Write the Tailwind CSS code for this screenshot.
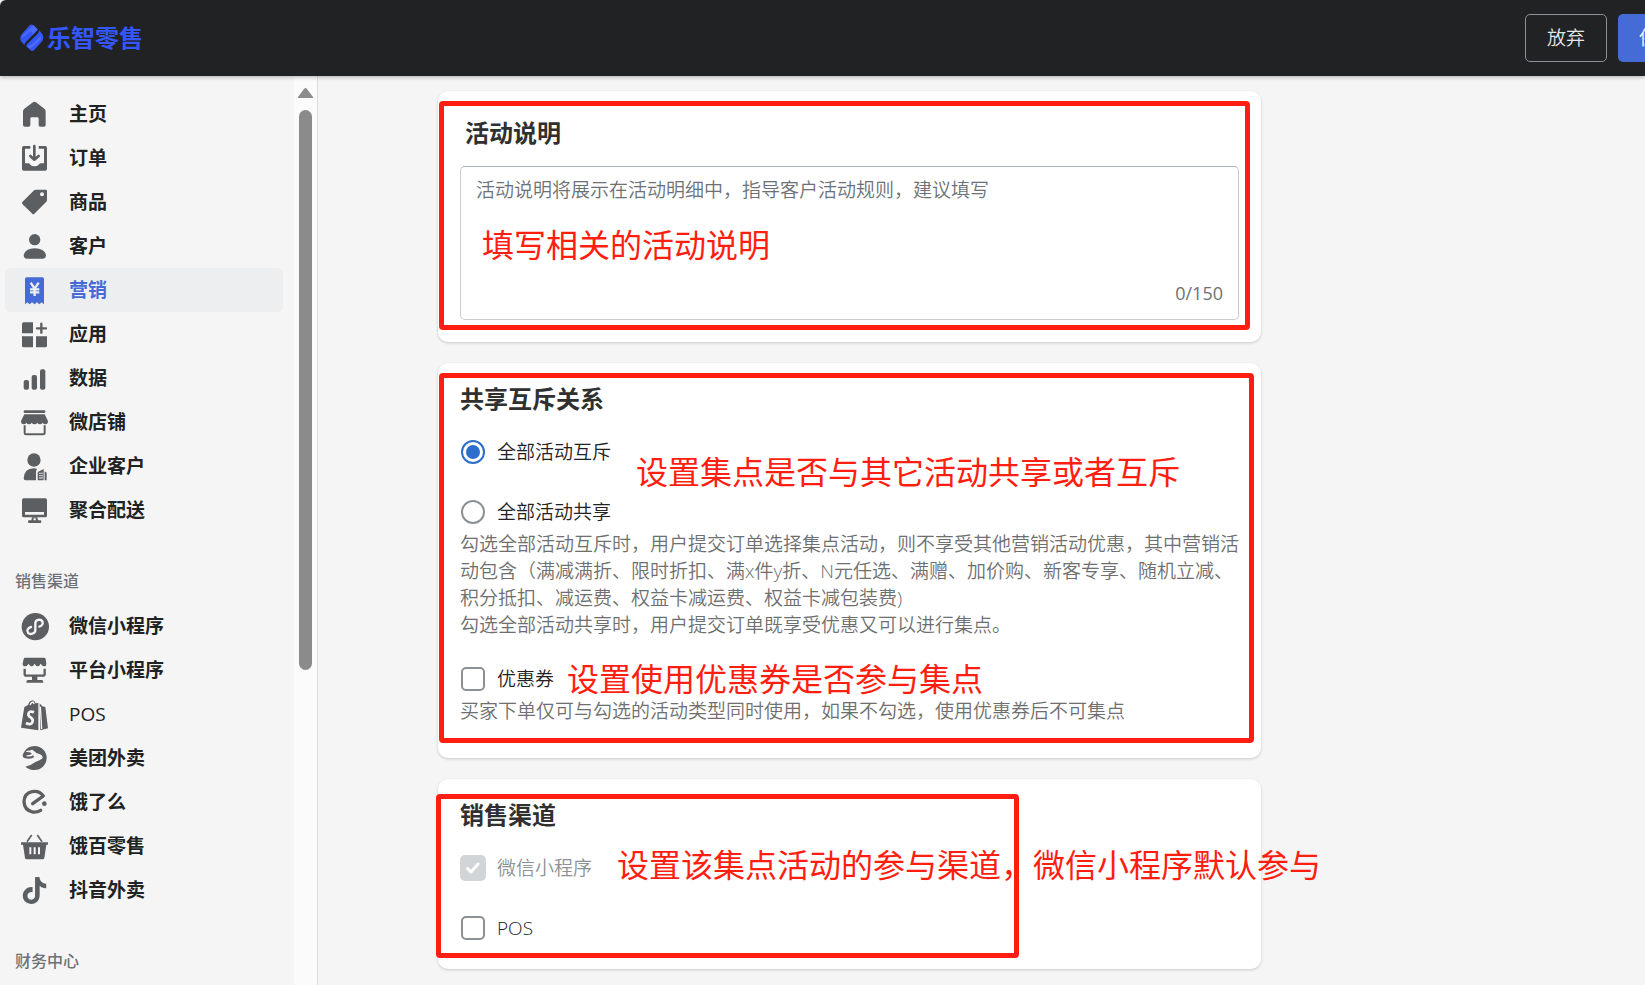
<!DOCTYPE html>
<html lang="zh-CN">
<head>
    <meta charset="UTF-8" />
    <meta name="viewport" content="width=device-width, initial-scale=1" />
    <title>乐智零售</title>
    <script src="https://cdn.jsdelivr.net/npm/@tailwindcss/browser@4"></script>
</head>
<body class="h-screen flex flex-col overflow-hidden bg-[#f5f5f5] text-[19px] leading-[27px] text-[#202223] font-['Open_Sans','Noto_Sans_CJK_SC',sans-serif]">

    <header class="relative z-10 h-[76px] shrink-0 flex items-center pl-5 bg-[#202223] rounded-tl-md shadow-[0_1px_4px_rgba(0,0,0,0.3)]">
        <a href="#" class="flex items-center gap-[3px] text-[#3457fb] text-2xl leading-7 font-bold">
            <svg class="w-6 h-7" viewBox="0 0 72 84" fill="#3457fb" aria-hidden="true">
                <path d="M29 4Q35 -1 41 4L52 14Q54 17 51 20L17 55Q13 59 13 64L3 51Q-2 43 4 32Z" />
                <path d="M58 19L67 31Q73 39 67 51L43 77Q36 84 31 78L21 69Q17 65 21 61L52 30Q57 25 58 19Z" />
                <path d="M5 42Q5 34 12 30L40 4L52 15Q53 18 50 20L36 34Q40 22 32 22Q24 28 5 42Z" fill="#5b78ff" opacity=".6" />
                <path d="M22 66Q34 65 43 55L62 35Q65 45 56 52L33 72Q28 76 22 66Z" fill="#5b78ff" opacity=".6" />
            </svg>
            乐智零售
        </a>
        <div class="ml-auto -mr-[53px] flex shrink-0 gap-[11px]">
            <button type="button" class="h-12 px-[21px] border border-[#8c9196] rounded-[5px] text-[#e3e5e7] font-[350]">放弃</button>
            <button type="button" class="h-12 px-[21px] bg-[#446bd6] rounded-[5px] text-white font-[350]">保存</button>
        </div>
    </header>

    <div class="flex flex-1 min-h-0">
        <aside class="w-[318px] shrink-0 flex border-r border-[#dcdcdc]">
            <nav class="flex-1 min-w-0 overflow-hidden pt-4 pl-[5px] pr-[11px] font-bold">
                <a href="#" class="h-11 flex items-center gap-[21px] pl-4 rounded-md">
                    <svg class="size-[27px] overflow-visible" viewBox="0 0 81 81" fill="#5c5f62"><path d="M36 4Q40 0 45 4L70 23Q74 26 74 31V72Q74 77 69 77H58Q53 77 53 72V53Q53 49 49 49H32Q28 49 28 53V72Q28 77 23 77H11Q6 77 6 72V31Q6 26 10 23Z" /></svg>
                    主页
                </a>
                <a href="#" class="h-11 flex items-center gap-[21px] pl-4 rounded-md">
                    <svg class="size-[27px] overflow-visible" viewBox="0 0 81 81" fill="#5c5f62">
                        <path d="M3 8Q3 3 8 3H28V11H12V55H22Q25 55 28 59Q32 64 40 64Q49 64 53 59Q56 55 59 55H69V11H53V3H73Q78 3 78 8V72Q78 77 73 77H8Q3 77 3 72Z" />
                        <path d="M40 3V44M28 33L40 44L53 33" fill="none" stroke="#5c5f62" stroke-width="8" stroke-linecap="round" stroke-linejoin="round" />
                    </svg>
                    订单
                </a>
                <a href="#" class="h-11 flex items-center gap-[21px] pl-4 rounded-md">
                    <svg class="size-[27px] overflow-visible" viewBox="0 0 81 81" fill="#5c5f62"><path fill-rule="evenodd" d="M40 3Q42 2 45 2H74Q78 2 78 6V34Q78 36 76 38L40 74Q37 77 34 74L4 45Q2 42 4 39ZM63 10A6 6 0 1 0 63 22A6 6 0 1 0 63 10Z" /></svg>
                    商品
                </a>
                <a href="#" class="h-11 flex items-center gap-[21px] pl-4 rounded-md">
                    <svg class="size-[27px] overflow-visible" viewBox="0 0 81 81" fill="#5c5f62">
                        <circle cx="41" cy="20" r="17" />
                        <path d="M8 66Q13 46 41 46Q70 46 75 66Q75 77 65 77H18Q8 77 8 66Z" />
                    </svg>
                    客户
                </a>
                <a href="#" aria-current="page" class="h-11 flex items-center gap-[21px] pl-4 rounded-md bg-[#edeeef] text-[#446bd6]">
                    <svg class="size-[27px] overflow-visible" viewBox="0 0 81 81" fill="#446bd6">
                        <path d="M12 6Q12 1 17 1H64Q69 1 69 6V82L62 76L55 82L48 76L41 82L33 76L26 82L19 76L12 82Z" />
                        <path d="M29 17L41 35L53 17M41 35V57M27 37H55M27 46H55" fill="none" stroke="#edeeef" stroke-width="7" />
                    </svg>
                    营销
                </a>
                <a href="#" class="h-11 flex items-center gap-[21px] pl-4 rounded-md">
                    <svg class="size-[27px] overflow-visible" viewBox="0 0 81 81" fill="#5c5f62">
                        <path d="M8 4H36V37H3V9Q3 4 8 4ZM3 46H36V79H8Q3 79 3 74ZM45 46H78V74Q78 79 73 79H45Z" />
                        <path d="M61 8V35M48 22H75" stroke="#5c5f62" stroke-width="7" stroke-linecap="round" />
                    </svg>
                    应用
                </a>
                <a href="#" class="h-11 flex items-center gap-[21px] pl-4 rounded-md">
                    <svg class="size-[27px] overflow-visible" viewBox="0 0 81 81" fill="#5c5f62">
                        <rect x="8" y="45" width="16" height="29" rx="6" />
                        <rect x="32" y="30" width="16" height="44" rx="6" />
                        <rect x="57" y="13" width="16" height="61" rx="6" />
                    </svg>
                    数据
                </a>
                <a href="#" class="h-11 flex items-center gap-[21px] pl-4 rounded-md">
                    <svg class="size-[27px] overflow-visible" viewBox="0 0 81 81" fill="#5c5f62">
                        <rect x="8" y="4" width="65" height="8" rx="3" />
                        <path d="M10 16H71L81 36Q81 46 73 46Q67 46 65 41Q62 46 57 46Q51 46 49 41Q46 46 41 46Q35 46 32 41Q30 46 24 46Q19 46 16 41Q14 46 8 46Q0 46 0 36Z" />
                        <path d="M11 49V72Q11 76 15 76H67Q71 76 71 72V49" fill="none" stroke="#5c5f62" stroke-width="6" />
                    </svg>
                    微店铺
                </a>
                <a href="#" class="h-11 flex items-center gap-[21px] pl-4 rounded-md">
                    <svg class="size-[27px] overflow-visible" viewBox="0 0 81 81" fill="#5c5f62">
                        <circle cx="39" cy="21" r="20" />
                        <path d="M8 76Q10 46 38 46Q44 46 48 48Q45 52 45 58V82H14Q8 82 8 76Z" />
                        <path fill-rule="evenodd" d="M50 82V57L68 48V82ZM55 59V63H59V59ZM61 59V63H65V59ZM55 66V70H59V66ZM61 66V70H65V66ZM55 73V77H59V73ZM61 73V77H65V73ZM71 55L77 59V82H71Z" />
                    </svg>
                    企业客户
                </a>
                <a href="#" class="h-11 flex items-center gap-[21px] pl-4 rounded-md">
                    <svg class="size-[27px] overflow-visible" viewBox="0 0 81 81" fill="#5c5f62">
                        <path fill-rule="evenodd" d="M8 4H73Q78 4 78 9V56Q78 61 73 61H8Q3 61 3 56V9Q3 4 8 4ZM12 45V53H69V45Z" />
                        <path d="M33 61H49L51 70H58Q61 70 61 74T58 78H24Q21 78 21 74T24 70H31ZM38 64L37 70H45L44 64Z" fill-rule="evenodd" />
                    </svg>
                    聚合配送
                </a>

                <h2 class="mt-7 mb-0.5 h-[42px] flex items-center pl-2.5 text-base font-medium text-[#6d7175]">销售渠道</h2>
                <a href="#" class="h-11 flex items-center gap-[21px] pl-4 rounded-md">
                    <svg class="size-[27px] overflow-visible" viewBox="0 0 81 81" fill="#5c5f62">
                        <circle cx="43" cy="41" r="41" />
                        <path d="M30 42C19 45 17 54 21 59C27 66 43 63 43 51V31C43 20 59 17 64 25C67 32 64 38 55 41" fill="none" stroke="#f5f5f5" stroke-width="7" stroke-linecap="round" />
                    </svg>
                    微信小程序
                </a>
                <a href="#" class="h-11 flex items-center gap-[21px] pl-4 rounded-md">
                    <svg class="size-[27px] overflow-visible" viewBox="0 0 81 81" fill="#5c5f62">
                        <path d="M12 2H69Q73 2 74 6L76 20Q76 28 70 28Q64 28 59 20Q55 28 50 28Q45 28 41 20Q37 28 32 28Q27 28 23 20Q18 28 12 28Q5 28 5 20L8 6Q9 2 12 2Z" />
                        <path d="M11 35V51Q11 56 16 56H66Q71 56 71 51V35" fill="none" stroke="#5c5f62" stroke-width="7" />
                        <path d="M33 56H49V69H63Q67 69 67 77H16Q16 69 20 69H33Z" />
                    </svg>
                    平台小程序
                </a>
                <a href="#" class="h-11 flex items-center gap-[21px] pl-4 rounded-md font-medium">
                    <svg class="size-[27px] overflow-visible" viewBox="0 0 81 81" fill="#5c5f62">
                        <path d="M0 80L10 18L21 12Q25 -1 35 -2Q42 -1 44 7L52 6V88Z" />
                        <path d="M27 12Q31 3 36 3Q39 6 39 9" fill="none" stroke="#f5f5f5" stroke-width="4" />
                        <path d="M56 7L64 16L73 18L81 82L58 88Z" />
                        <path d="M58 17L62 84" stroke="#f5f5f5" stroke-width="4" />
                        <path d="M39 34Q24 28 22 39Q21 45 30 50Q38 56 34 64Q29 74 15 66" fill="none" stroke="#f5f5f5" stroke-width="8" />
                    </svg>
                    POS
                </a>
                <a href="#" class="h-11 flex items-center gap-[21px] pl-4 rounded-md">
                    <svg class="size-[27px] overflow-visible" viewBox="0 0 81 81" fill="#5c5f62">
                        <path d="M9 22Q19 3 41 3A36 36 0 0 1 41 75Q25 75 13 65Q29 62 43 51Q55 47 63 41Q69 34 57 28Q46 26 38 17Q32 12 27 17Q19 16 14 21L27 22L33 27Q24 31 17 31L16 34Q31 36 36 31L40 36Q31 44 12 40Q4 37 5 30Z" />
                    </svg>
                    美团外卖
                </a>
                <a href="#" class="h-11 flex items-center gap-[21px] pl-4 rounded-md">
                    <svg class="size-[27px] overflow-visible" viewBox="0 0 81 81" fill="#5c5f62">
                        <path d="M35 44L67 21Q54 3 33 8Q10 13 9 38Q10 63 34 69Q48 71 59 64" fill="none" stroke="#5c5f62" stroke-width="10" stroke-linecap="round" stroke-linejoin="round" />
                        <circle cx="70" cy="44" r="7" />
                    </svg>
                    饿了么
                </a>
                <a href="#" class="h-11 flex items-center gap-[21px] pl-4 rounded-md">
                    <svg class="size-[27px] overflow-visible" viewBox="0 0 81 81" fill="#5c5f62">
                        <path d="M18 26L32 6M63 26L49 6" stroke="#5c5f62" stroke-width="5" />
                        <path fill-rule="evenodd" d="M0 28H81V35H76L70 75Q69 79 65 79H17Q13 79 12 75L6 35H0ZM25 43V64H31V43ZM38 43V64H44V43ZM51 43V64H57V43Z" />
                    </svg>
                    饿百零售
                </a>
                <a href="#" class="h-11 flex items-center gap-[21px] pl-4 rounded-md">
                    <svg class="size-[27px] overflow-visible" viewBox="0 0 24 24" fill="#5c5f62"><path d="M12.525.02c1.31-.02 2.61-.01 3.91-.02.08 1.53.63 3.09 1.75 4.17 1.12 1.11 2.7 1.62 4.24 1.79v4.03c-1.44-.05-2.89-.35-4.2-.97-.57-.26-1.1-.59-1.62-.93-.01 2.92.01 5.84-.02 8.75-.08 1.4-.54 2.79-1.35 3.94-1.31 1.92-3.58 3.17-5.91 3.21-1.43.08-2.86-.31-4.08-1.03-2.02-1.19-3.44-3.37-3.65-5.71-.02-.5-.03-1-.01-1.49.18-1.9 1.12-3.72 2.58-4.96 1.66-1.44 3.98-2.13 6.15-1.72.02 1.48-.04 2.96-.04 4.44-.99-.32-2.15-.23-3.02.37-.63.41-1.11 1.04-1.36 1.75-.21.51-.15 1.07-.14 1.61.24 1.64 1.82 3.02 3.5 2.87 1.12-.01 2.19-.66 2.77-1.61.19-.33.4-.67.41-1.06.1-1.79.06-3.57.07-5.36.01-4.03-.01-8.05.02-12.07z" /></svg>
                    抖音外卖
                </a>

                <h2 class="mt-7 mb-0.5 h-[42px] flex items-center pl-2.5 text-base font-medium text-[#6d7175]">财务中心</h2>
            </nav>

            <!-- Scrollbar -->
            <div class="w-[23px] shrink-0 flex flex-col items-center gap-3 pt-3 bg-[#fbfbfb]" aria-hidden="true">
                <svg class="w-[15px] h-[10px] shrink-0" viewBox="0 0 15 10" fill="#8b8b8b"><path d="M6 1Q7.500 -1 9 1L15 9V10H0V9Z" /></svg>
                <div class="w-[13px] h-[560px] rounded-full bg-[#8b8b8b]"></div>
            </div>
        </aside>

        <main class="flex-1 min-w-0 overflow-hidden pt-[15px] pl-[120px]">
            <form class="w-[823px] flex flex-col gap-[21px]">
                <section class="relative bg-white rounded-[10px] shadow-[0_1px_3px_rgba(0,0,0,0.18)] pt-6 px-[22px] pb-[22px]">
                    <h2 class="mb-[15px] pl-[5px] text-2xl leading-9 font-bold text-[#303030]"><label for="desc">活动说明</label></h2>
                    <div class="relative">
                        <textarea id="desc" maxlength="150" placeholder="活动说明将展示在活动明细中，指导客户活动规则，建议填写" class="block w-full h-[154px] resize-none px-[15px] py-2.5 border border-[#c9cccf] border-t-[#aeb4b9] rounded-[5px] font-[350] placeholder:text-[#6d7175]"></textarea>
                        <span class="absolute right-4 bottom-[13px] text-lg text-[#6d7175]">0/150</span>
                    </div>
                    <div class="absolute left-px top-[10px] w-[811px] h-[229px] border-5 border-[#ff1e10] rounded-sm pointer-events-none"></div>
                    <p class="absolute left-11 top-[138px] text-[32px] leading-8 font-normal whitespace-nowrap text-[#ff1e10] pointer-events-none">填写相关的活动说明</p>
                </section>

                <section class="relative bg-white rounded-[10px] shadow-[0_1px_3px_rgba(0,0,0,0.18)] pt-[22px] px-[22px] pb-[33px]">
                    <h2 class="mb-[25px] text-2xl leading-7 font-bold text-[#303030]">共享互斥关系</h2>
                    <div class="flex flex-col items-start gap-8 font-[350]">
                        <label class="h-7 flex items-center gap-3">
                            <input type="radio" name="relation" checked class="appearance-none ml-px size-6 grid place-items-center border-2 border-[#8c9196] rounded-full checked:border-[#2c6ecb] checked:before:size-[14px] checked:before:rounded-full checked:before:bg-[#2c6ecb]" />
                            全部活动互斥
                        </label>
                        <label class="h-7 flex items-center gap-3">
                            <input type="radio" name="relation" class="appearance-none ml-px size-6 grid place-items-center border-2 border-[#8c9196] rounded-full checked:border-[#2c6ecb] checked:before:size-[14px] checked:before:rounded-full checked:before:bg-[#2c6ecb]" />
                            全部活动共享
                        </label>
                    </div>
                    <p class="mt-[5px] mb-[26px] font-[350] text-[#6f6f6f]">勾选全部活动互斥时，用户提交订单选择集点活动，则不享受其他营销活动优惠，其中营销活动包含（满减满折、限时折扣、满x件y折、N元任选、满赠、加价购、新客专享、随机立减、积分抵扣、减运费、权益卡减运费、权益卡减包装费)<br />勾选全部活动共享时，用户提交订单既享受优惠又可以进行集点。</p>
                    <label class="h-7 w-fit flex items-center gap-3 font-[350]">
                        <input type="checkbox" class="appearance-none ml-px size-6 border-2 border-[#8c9196] rounded-[5px] checked:bg-[#2c6ecb]" />
                        优惠券
                    </label>
                    <p class="mt-[5px] font-[350] text-[#6f6f6f]">买家下单仅可与勾选的活动类型同时使用，如果不勾选，使用优惠券后不可集点</p>
                    <div class="absolute left-px top-[10px] w-[815px] h-[370px] border-5 border-[#ff1e10] rounded-sm pointer-events-none"></div>
                    <p class="absolute left-[198px] top-[93px] text-[32px] leading-8 font-normal whitespace-nowrap text-[#ff1e10] pointer-events-none">设置集点是否与其它活动共享或者互斥</p>
                    <p class="absolute left-[129px] top-[300px] text-[32px] leading-8 font-normal whitespace-nowrap text-[#ff1e10] pointer-events-none">设置使用优惠券是否参与集点</p>
                </section>

                <section class="relative bg-white rounded-[10px] shadow-[0_1px_3px_rgba(0,0,0,0.18)] pt-[22px] px-[22px] pb-[27px]">
                    <h2 class="mb-[25px] text-2xl leading-7 font-bold text-[#303030]">销售渠道</h2>
                    <div class="flex flex-col items-start gap-8 font-[350]">
                        <label class="relative h-7 flex items-center gap-[11px] text-[#8c9196]">
                            <input type="checkbox" checked disabled class="appearance-none size-[26px] rounded-[5px] bg-[#d2d5d8]" />
                            <svg class="absolute left-0 top-px size-[26px]" viewBox="0 0 26 26" fill="none" stroke="#fff" stroke-width="3" stroke-linecap="round" stroke-linejoin="round" aria-hidden="true"><path d="M7.500 13.500L11 17L18 9" /></svg>
                            微信小程序
                        </label>
                        <label class="h-7 flex items-center gap-3">
                            <input type="checkbox" class="appearance-none ml-px size-6 border-2 border-[#8c9196] rounded-[5px] checked:bg-[#2c6ecb]" />
                            POS
                        </label>
                    </div>
                    <div class="absolute -left-0.5 top-[15px] w-[583px] h-[164px] border-5 border-[#ff1e10] rounded-sm pointer-events-none"></div>
                    <p class="absolute left-[179px] top-[70px] text-[32px] leading-8 font-normal whitespace-nowrap text-[#ff1e10] pointer-events-none">设置该集点活动的参与渠道，微信小程序默认参与</p>
                </section>
            </form>
        </main>
    </div>
</body>
</html>
